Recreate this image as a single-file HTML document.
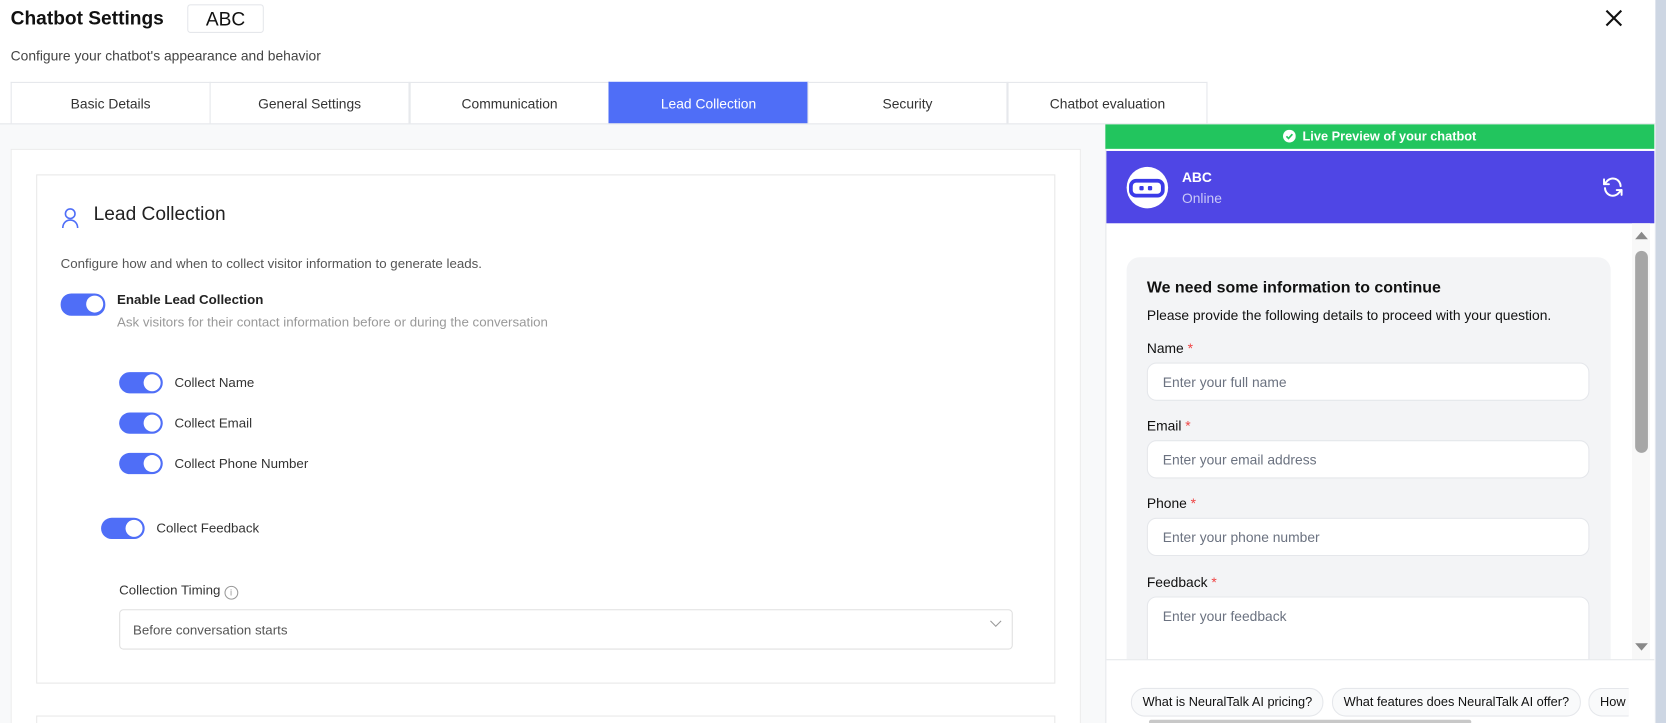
<!DOCTYPE html>
<html><head><meta charset="utf-8"><style>
*{box-sizing:border-box;margin:0;padding:0}
html,body{width:1666px;height:723px;overflow:hidden;background:#fff;font-family:"Liberation Sans",sans-serif}
#w{position:absolute;left:0;top:0;width:1566px;height:680px;transform:scale(1.06386,1.0632);transform-origin:0 0;overflow:hidden}
.a{position:absolute}
.tab{position:absolute;top:77px;height:40px;width:188px;border:1px solid #e5e7eb;border-bottom:none;font-size:13px;color:#333;text-align:center;line-height:39px;background:#fff}
.tg{position:absolute;width:41px;height:20px;border-radius:10px;background:#4f6ef7}
.tg::after{content:"";position:absolute;right:2px;top:2px;width:16px;height:16px;border-radius:50%;background:#fff}
.lb{position:absolute;font-size:12.5px;color:#333}
.fl{position:absolute;left:1078px;font-size:13px;color:#111}
.fl b{color:#ef4444;font-weight:normal}
.in{position:absolute;left:1078px;width:416px;height:36px;background:#fff;border:1px solid #e5e7eb;border-radius:9px;font-size:13px;color:#6b7280;padding:10px 0 0 14px}
.chip{position:absolute;top:647px;height:27px;border:1px solid #e5e7eb;border-radius:13px;background:#f9fafb;font-size:12px;color:#111;line-height:25px;padding:0 10px;white-space:nowrap}
</style></head><body><div id="w">
<div class="a" style="left:10px;top:7px;font-size:18px;font-weight:bold;color:#111">Chatbot Settings</div>
<div class="a" style="left:176px;top:4px;width:72px;height:27px;border:1px solid #e5e7eb;border-radius:3px;font-size:18px;text-align:center;line-height:26px;color:#111">ABC</div>
<div class="a" style="left:10px;top:45px;font-size:13px;color:#444">Configure your chatbot's appearance and behavior</div>
<svg class="a" style="left:1507px;top:7px" width="20" height="20" viewBox="0 0 20 20"><path d="M3 3L17 17M17 3L3 17" stroke="#111" stroke-width="2"/></svg>
<div class="a" style="left:1556px;top:0;width:10px;height:680px;background:#cdd6e3"></div>
<div class="tab" style="left:10px">Basic Details</div>
<div class="tab" style="left:197px">General Settings</div>
<div class="tab" style="left:385px">Communication</div>
<div class="tab" style="left:572px;background:#4f6ef7;color:#fff;border-color:#4f6ef7">Lead Collection</div>
<div class="tab" style="left:759px">Security</div>
<div class="tab" style="left:947px">Chatbot evaluation</div>
<div class="a" style="left:0;top:116px;width:1556px;height:564px;background:#f8f9fa;border-top:1px solid #e5e7eb"></div>
<div class="a" style="left:10px;top:140px;width:1006px;height:560px;background:#fff;border:1px solid #ececec"></div>
<div class="a" style="left:34px;top:164px;width:958px;height:479px;background:#fff;border:1px solid #e8e8e8"></div>
<div class="a" style="left:34px;top:673px;width:958px;height:30px;background:#fff;border:1px solid #e8e8e8"></div>
<svg class="a" style="left:57px;top:195px" width="18" height="20" viewBox="0 0 18 20"><circle cx="9" cy="6" r="4.5" fill="none" stroke="#4f6ef7" stroke-width="1.5"/><path d="M2 19.5c0-4.5 3-7.5 7-7.5s7 3 7 7.5" fill="none" stroke="#4f6ef7" stroke-width="1.5"/></svg>
<div class="a" style="left:88px;top:191px;font-size:18px;color:#222">Lead Collection</div>
<div class="a" style="left:57px;top:241px;font-size:12.5px;color:#555">Configure how and when to collect visitor information to generate leads.</div>
<div class="tg" style="left:57px;top:276px;width:42px;height:21px"></div>
<div class="a" style="left:110px;top:275px;font-size:12.5px;font-weight:bold;color:#222">Enable Lead Collection</div>
<div class="a" style="left:110px;top:296px;font-size:12.5px;color:#999">Ask visitors for their contact information before or during the conversation</div>
<div class="tg" style="left:112px;top:350px"></div><div class="lb" style="left:164px;top:353px">Collect Name</div>
<div class="tg" style="left:112px;top:388px"></div><div class="lb" style="left:164px;top:391px">Collect Email</div>
<div class="tg" style="left:112px;top:426px"></div><div class="lb" style="left:164px;top:429px">Collect Phone Number</div>
<div class="tg" style="left:95px;top:487px"></div><div class="lb" style="left:147px;top:490px">Collect Feedback</div>
<div class="lb" style="left:112px;top:548px">Collection Timing <span style="display:inline-block;width:13px;height:13px;border:1px solid #999;border-radius:50%;font-size:9px;color:#999;text-align:center;line-height:11px;vertical-align:-1px">i</span></div>
<div class="a" style="left:112px;top:573px;width:840px;height:38px;border:1px solid #e0e0e0;border-radius:4px;font-size:12.5px;color:#555;padding:12px 0 0 12px">Before conversation starts</div>
<svg class="a" style="left:930px;top:583px" width="12" height="8" viewBox="0 0 12 8"><path d="M1 1l5 5 5-5" fill="none" stroke="#999" stroke-width="1"/></svg>
<!-- right -->
<div class="a" style="left:1039px;top:117px;width:516px;height:563px;background:#fff;border-left:1px solid #e5e7eb"></div>
<div class="a" style="left:1039px;top:117px;width:516px;height:23px;background:#22c55e;color:#fff;font-size:12px;font-weight:bold;text-align:center;line-height:23px"><svg width="12" height="12" viewBox="0 0 12 12" style="vertical-align:-2px;margin-right:6px"><circle cx="6" cy="6" r="6" fill="#fff"/><path d="M3.2 6.2l2 2 3.6-4" fill="none" stroke="#22c55e" stroke-width="1.6"/></svg>Live Preview of your chatbot</div>
<div class="a" style="left:1040px;top:142px;width:515px;height:68px;background:#4f46e5"></div>
<div class="a" style="left:1059px;top:157px;width:39px;height:39px;border-radius:50%;background:#fff"></div>
<svg class="a" style="left:1061px;top:167px" width="36" height="20" viewBox="0 0 36 20"><rect x="2" y="3" width="30" height="14" rx="5" fill="none" stroke="#3b3be8" stroke-width="3.5"/><rect x="10" y="8" width="4" height="4" rx="1" fill="#3b3be8"/><rect x="18" y="8" width="4" height="4" rx="1" fill="#3b3be8"/></svg>
<div class="a" style="left:1111px;top:159px;font-size:13px;font-weight:bold;color:#fff">ABC</div>
<div class="a" style="left:1111px;top:179px;font-size:13px;color:#c9c8f7">Online</div>
<svg class="a" style="left:1505px;top:165px" width="22" height="22" viewBox="0 0 24 24" fill="none" stroke="#fff" stroke-width="2" stroke-linecap="round" stroke-linejoin="round"><path d="M20 11a8 8 0 0 0-14.5-4.5L3 9"/><path d="M3 4v5h5"/><path d="M4 13a8 8 0 0 0 14.5 4.5L21 15"/><path d="M21 20v-5h-5"/></svg>
<div class="a" style="left:1534px;top:210px;width:17px;height:410px;background:#f8f8f8"></div>
<svg class="a" style="left:1536px;top:216px" width="14" height="10"><path d="M1 9L7 2 13 9Z" fill="#888"/></svg>
<svg class="a" style="left:1536px;top:604px" width="14" height="10"><path d="M1 1L7 8 13 1Z" fill="#888"/></svg>
<div class="a" style="left:1537px;top:236px;width:12px;height:190px;border-radius:6px;background:#a6a6a6"></div>
<div class="a" style="left:1059px;top:242px;width:455px;height:378px;background:#f3f4f6;border-radius:12px 12px 0 0"></div>
<div class="a" style="left:1078px;top:262px;font-size:15px;font-weight:bold;color:#111">We need some information to continue</div>
<div class="a" style="left:1078px;top:289px;font-size:13px;color:#111">Please provide the following details to proceed with your question.</div>
<div class="fl" style="top:320px">Name <b>*</b></div><div class="in" style="top:341px">Enter your full name</div>
<div class="fl" style="top:393px">Email <b>*</b></div><div class="in" style="top:414px">Enter your email address</div>
<div class="fl" style="top:466px">Phone <b>*</b></div><div class="in" style="top:487px">Enter your phone number</div>
<div class="fl" style="top:540px">Feedback <b>*</b></div><div class="in" style="top:561px;height:70px">Enter your feedback</div>
<div class="a" style="left:1040px;top:620px;width:515px;height:60px;background:#fff;border-top:1px solid #e5e7eb"></div>
<div class="chip" style="left:1063px">What is NeuralTalk AI pricing?</div>
<div class="chip" style="left:1252px">What features does NeuralTalk AI offer?</div>
<div class="chip" style="left:1493px;width:38px;border-right:none;border-radius:13px 0 0 13px">How</div>
<div class="a" style="left:1080px;top:677px;width:303px;height:4px;border-radius:2px;background:#c8c8c8"></div>
</div></body></html>
